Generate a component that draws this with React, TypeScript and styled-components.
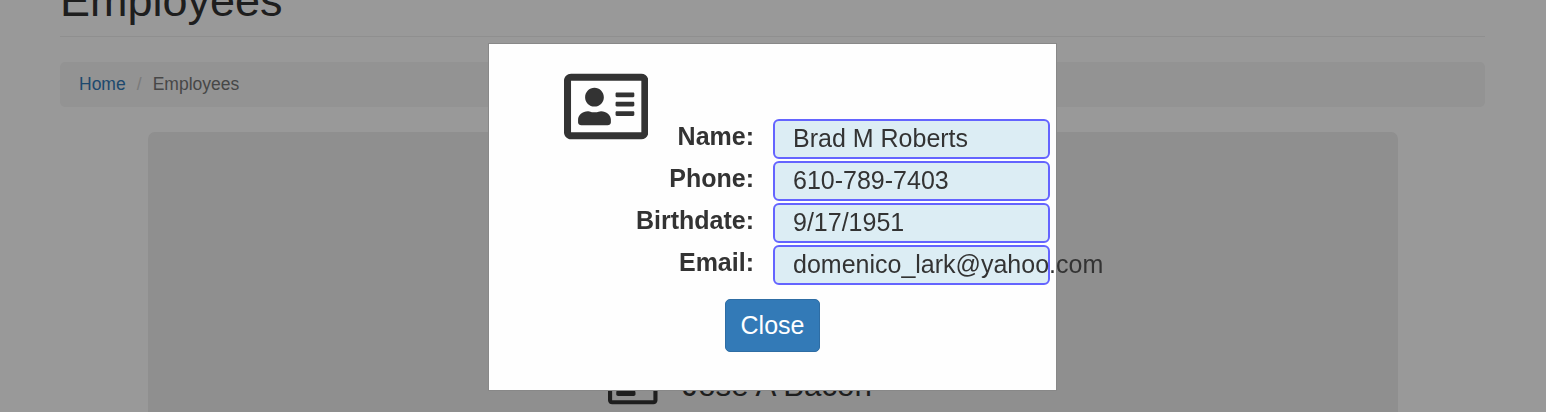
import React from 'react';
import styled, { createGlobalStyle } from 'styled-components';
import { FaRegAddressCard } from 'react-icons/fa';

const GlobalStyle = createGlobalStyle`
  * { box-sizing: border-box; }
  html, body { margin: 0; height: 100%; overflow: hidden; }
  body {
    background: #fff;
    color: #333;
    font-family: "Liberation Sans", Arial, sans-serif;
    font-size: 17.5px;
    line-height: 25px;
  }
`;

const Page = styled.main`
  height: 412px;
  overflow: hidden;
  padding: 0 61px 0 60px;
`;

const PageHeader = styled.header`
  height: 37px;
  display: flex;
  align-items: flex-end;
  padding-bottom: 10px;
  border-bottom: 1px solid #eee;
  margin-bottom: 25px;
`;

const Title = styled.h1`
  margin: 0;
  font-size: 45px;
  font-weight: 400;
  line-height: 50px;
`;

const Breadcrumb = styled.nav`
  display: flex;
  align-items: center;
  height: 45px;
  padding: 0 19px;
  margin-bottom: 25px;
  background: #f5f5f5;
  border-radius: 5px;
  color: #777;
`;

const HomeLink = styled.a`
  color: #337ab7;
  text-decoration: none;
`;

const Separator = styled.span`
  width: 27px;
  text-align: center;
  color: #ccc;
`;

const Jumbotron = styled.section`
  height: 400px;
  margin: 0 87px 0 88px;
  padding: 231px 0 0 460px;
  display: flex;
  align-items: flex-start;
  gap: 25px;
  background: #eee;
  border-radius: 7px;
`;

const CardIcon = styled(FaRegAddressCard)<{ $size: number }>`
  display: block;
  flex: none;
  width: ${({ $size }) => $size * 1.125}px;
  height: ${({ $size }) => $size}px;
  margin-top: 0.4px;
`;

const EmployeeName = styled.span`
  margin-top: 1px;
  font-size: 31.25px;
  line-height: 43px;
`;

const Backdrop = styled.div`
  position: fixed;
  inset: 0;
  background: rgba(0, 0, 0, 0.4);
`;

const Modal = styled.div`
  position: absolute;
  top: 43px;
  left: 488px;
  width: 569px;
  height: 348px;
  padding: 25px 6px 0 75px;
  background: #fefefe;
  border: 1px solid #888;
  font-size: 25px;
  line-height: 36px;
`;

const ModalBody = styled.div`
  position: relative;
  padding-top: 50px;
`;

const IconSlot = styled.div`
  position: absolute;
  top: 0;
  left: 0;
`;

const Details = styled.dl`
  margin: 0;
  display: grid;
  grid-template-columns: 190px 277px;
  grid-auto-rows: 40px;
  column-gap: 19px;
  row-gap: 2px;
`;

const Label = styled.dt`
  font-weight: 700;
  text-align: right;
  line-height: 34px;
`;

const Value = styled.dd`
  margin: 0;
  padding-left: 18px;
  border: 2px solid #6464ff;
  border-radius: 6px;
  background: #dcedf4;
  line-height: 34px;
  white-space: nowrap;
`;

const Footer = styled.footer`
  padding: 14px 0 0 161px;
`;

const CloseButton = styled.button`
  display: block;
  width: 95px;
  height: 53px;
  padding: 0 0 2px;
  border: 1px solid #2e6da4;
  border-radius: 5px;
  background: #337ab7;
  color: #fff;
  font: inherit;
`;

const details = [
  ['Name:', 'Brad M Roberts'],
  ['Phone:', '610-789-7403'],
  ['Birthdate:', '9/17/1951'],
  ['Email:', 'domenico_lark@yahoo.com'],
];

export default function App() {
  return (
    <>
      <GlobalStyle />
      <Page>
        <PageHeader>
          <Title>Employees</Title>
        </PageHeader>
        <Breadcrumb>
          <HomeLink>Home</HomeLink>
          <Separator>/</Separator>
          <span>Employees</span>
        </Breadcrumb>
        <Jumbotron>
          <CardIcon $size={44} />
          <EmployeeName>Jose A Bacon</EmployeeName>
        </Jumbotron>
      </Page>
      <Backdrop>
        <Modal role="dialog">
          <ModalBody>
            <IconSlot>
              <CardIcon $size={75} />
            </IconSlot>
            <Details>
              {details.map(([label, value]) => (
                <React.Fragment key={label}>
                  <Label>{label}</Label>
                  <Value>{value}</Value>
                </React.Fragment>
              ))}
            </Details>
          </ModalBody>
          <Footer>
            <CloseButton>Close</CloseButton>
          </Footer>
        </Modal>
      </Backdrop>
    </>
  );
}
